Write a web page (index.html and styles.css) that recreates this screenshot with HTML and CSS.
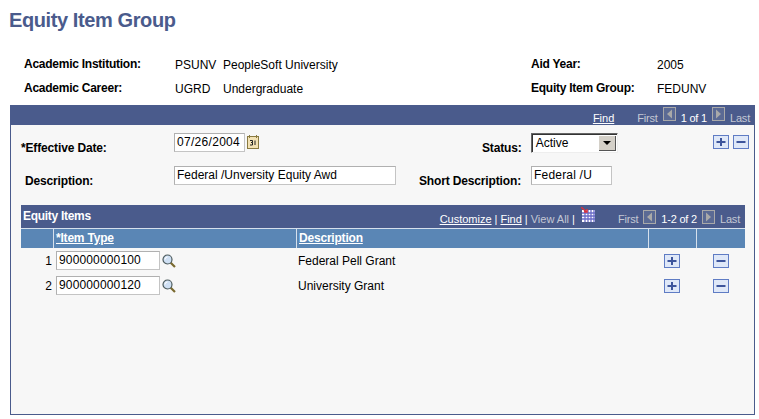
FILE: index.html
```html
<!DOCTYPE html>
<html lang="en">
<head>
  <meta charset="UTF-8" />
  <title>Equity Item Group</title>
  <link rel="stylesheet" href="styles.css">
</head>
<body>
  <svg class="defs" width="0" height="0">
    <symbol id="i-plus" viewBox="0 0 16 14"><rect x="0.5" y="0.5" width="15" height="13" fill="#dfe8f8" stroke="#5f7cc4"/><path d="M3.5 7h9M8 3v8" stroke="#3d559c" stroke-width="2"/></symbol>
    <symbol id="i-minus" viewBox="0 0 16 14"><rect x="0.5" y="0.5" width="15" height="13" fill="#dfe8f8" stroke="#5f7cc4"/><path d="M3.5 7h9" stroke="#3d559c" stroke-width="2"/></symbol>
    <symbol id="i-prev" viewBox="0 0 13 14"><rect x="0.5" y="0.5" width="12" height="13" fill="#5b6a94" stroke="#a9a9a9"/><path d="M9 2.500v9L4 7z" fill="#a9a9a9"/></symbol>
    <symbol id="i-next" viewBox="0 0 13 14"><rect x="0.5" y="0.5" width="12" height="13" fill="#5b6a94" stroke="#a9a9a9"/><path d="M4 2.500v9L9 7z" fill="#a9a9a9"/></symbol>
    <symbol id="i-lens" viewBox="0 0 14 14"><path d="M8.500 8.500l4.500 4.500" stroke="#7a6a30" stroke-width="2.200"/><circle cx="5.500" cy="5.500" r="4.500" fill="#cfe0f4" stroke="#4c5a5c" stroke-width="1.200"/><path d="M3 5.500a2.500 2.500 0 0 1 2.500-2.500" stroke="#fff" fill="none"/></symbol>
  </svg>

  <h1 class="page-title">Equity Item Group</h1>

  <div class="keys">
    <div class="key-label">Academic Institution:</div>
    <div class="key-value"><span class="key-code">PSUNV</span>PeopleSoft University</div>
    <div class="key-label">Aid Year:</div>
    <div class="key-value">2005</div>
    <div class="key-label">Academic Career:</div>
    <div class="key-value"><span class="key-code">UGRD</span>Undergraduate</div>
    <div class="key-label">Equity Item Group:</div>
    <div class="key-value">FEDUNV</div>
  </div>

  <div class="panel">
    <div class="panel-bar">
      <a class="link find-link">Find</a>
      <span class="pager">
        <span class="dim">First</span>
        <svg class="nav-icon"><use href="#i-prev"/></svg>
        <span>1 of 1</span>
        <svg class="nav-icon"><use href="#i-next"/></svg>
        <span class="dim">Last</span>
      </span>
    </div>

    <div class="panel-body">
      <div class="form-rows">
        <div class="form-row row-first">
          <label class="field-label label-date">*Effective Date:</label>
          <span class="input input-date">07/26/2004</span>
          <svg class="cal-icon" viewBox="0 0 12 14">
            <rect x="0.500" y="1.500" width="11" height="12" fill="#f3e2b4" stroke="#8a7a40"/>
            <path d="M2.500 0v3M9.500 0v3" stroke="#8a7a40"/>
            <path d="M3 5.500h2.500v2H4M5.500 7.500v2.500H3M8 5.500v4.500" stroke="#222" fill="none"/>
          </svg>
          <label class="field-label label-status">Status:</label>
          <span class="select">
            <span class="select-text">Active</span>
            <span class="select-btn"><i></i></span>
          </span>
          <span class="row-actions">
            <svg class="btn-icon"><use href="#i-plus"/></svg>
            <svg class="btn-icon"><use href="#i-minus"/></svg>
          </span>
        </div>
        <div class="form-row row-second">
          <label class="field-label label-desc">Description:</label>
          <span class="input input-desc">Federal /Unversity Equity Awd</span>
          <label class="field-label label-short">Short Description:</label>
          <span class="input input-short">Federal /U</span>
        </div>
      </div>

      <div class="grid">
        <div class="grid-title">
          <span class="grid-name">Equity Items</span>
          <span class="grid-tools">
            <a class="link">Customize</a><span class="sep">|</span><a class="link">Find</a><span class="sep">|</span><span class="dim">View All</span><span class="sep">|</span>
            <svg class="sheet-icon" viewBox="0 0 14 15">
              <rect x="1" y="3" width="13" height="12" fill="#fff"/>
              <path d="M1 6h13M1 9h13M1 12h13M4 3v12M7 3v12M10 3v12M13 3v12" stroke="#6a6cc8" stroke-width="1.300"/>
              <path d="M0 0l5 4.500M3 5h3V2" stroke="#d8323c" stroke-width="1.500" fill="none"/>
            </svg>
          </span>
          <span class="pager">
            <span class="dim pager-text">First</span>
            <svg class="nav-icon"><use href="#i-prev"/></svg>
            <span class="pager-text">1-2 of 2</span>
            <svg class="nav-icon"><use href="#i-next"/></svg>
            <span class="dim pager-text">Last</span>
          </span>
        </div>

        <div class="grid-row grid-head">
          <div class="head-cell"></div>
          <div class="head-cell"><a class="link">*Item Type</a></div>
          <div class="head-cell"><a class="link">Description</a></div>
          <div class="head-cell"></div>
          <div class="head-cell"></div>
        </div>

        <div class="grid-row item-row">
          <div class="row-num">1</div>
          <div class="type-cell">
            <span class="input input-type">900000000100</span>
            <svg class="lens-icon"><use href="#i-lens"/></svg>
          </div>
          <div class="desc-cell">Federal Pell Grant</div>
          <div class="icon-cell"><svg class="btn-icon"><use href="#i-plus"/></svg></div>
          <div class="icon-cell"><svg class="btn-icon"><use href="#i-minus"/></svg></div>
        </div>
        <div class="grid-row item-row">
          <div class="row-num">2</div>
          <div class="type-cell">
            <span class="input input-type">900000000120</span>
            <svg class="lens-icon"><use href="#i-lens"/></svg>
          </div>
          <div class="desc-cell">University Grant</div>
          <div class="icon-cell"><svg class="btn-icon"><use href="#i-plus"/></svg></div>
          <div class="icon-cell"><svg class="btn-icon"><use href="#i-minus"/></svg></div>
        </div>
      </div>
    </div>
  </div>
</body>
</html>
```

FILE: styles.css
```css
body {
  font-family: "Liberation Sans", Arial, sans-serif;
  font-size: 12px;
  background: #fff;
  color: #000;
  margin: 0;
  height: 419px;
  overflow: hidden;
}

.defs {
  position: absolute;
}

.page-title {
  color: #4a5b8c;
  font-size: 20px;
  font-weight: bold;
  letter-spacing: -0.4px;
  line-height: 24px;
  margin: 0;
  padding: 8px 0 0 9px;
}

/* key fields above the panel */
.keys {
  display: grid;
  grid-template-columns: 151px 356px 126px 1fr;
  grid-auto-rows: 24px;
  margin: 25px 0 0 24px;
  height: 48px;
}

.key-label {
  font-weight: bold;
  letter-spacing: -0.25px;
  line-height: 15px;
}

.key-value {
  line-height: 17px;
}

.key-code {
  display: inline-block;
  width: 48px;
}

/* main panel */
.panel {
  margin: 0 4px 0 10px;
  height: 309px;
  border: solid #4a5b8c;
  border-width: 0 1px 1px 1px;
  background: #f7f7f7;
}

.panel-bar {
  display: flex;
  align-items: flex-end;
  justify-content: flex-end;
  height: 20px;
  margin: 0 -1px;
  padding-right: 5px;
  box-sizing: border-box;
  background: #4a5b8c;
  color: #fff;
  font-size: 11px;
}

.link {
  color: #fff;
  text-decoration: underline;
}

.find-link {
  margin-right: 23px;
  line-height: 14px;
}

.pager {
  display: flex;
  align-items: flex-end;
  gap: 5px;
  letter-spacing: -0.2px;
  line-height: 14px;
  color: #fff;
}

.dim {
  color: #c4c8d4;
}

.nav-icon {
  width: 13px;
  height: 14px;
  margin-bottom: 4px;
}

.panel-body {
  padding: 0 9px 0 10px;
}

/* form rows */
.form-rows {
  height: 80px;
}

.form-row {
  display: flex;
  align-items: flex-start;
  box-sizing: border-box;
}

.form-row > * {
  flex-shrink: 0;
}

.row-first {
  height: 38px;
  padding-top: 8px;
}

.row-second {
  height: 42px;
  padding-top: 3px;
}

.field-label {
  font-weight: bold;
  letter-spacing: -0.15px;
  line-height: 15px;
  margin-top: 8px;
}

.label-date {
  width: 153px;
}

.label-status {
  margin-left: 223px;
  margin-right: 9px;
}

.label-desc {
  width: 153px;
  padding-left: 4px;
  box-sizing: border-box;
}

.label-short {
  margin-left: 23px;
  margin-right: 10px;
}

.input {
  display: inline-block;
  box-sizing: border-box;
  height: 19px;
  padding: 0 2px;
  line-height: 16px;
  background: #fff;
  border: 1px solid #c4c4c4;
  border-top-color: #b0b0b0;
  border-left-color: #b0b0b0;
  white-space: nowrap;
}

.input-date {
  width: 71px;
  letter-spacing: 0.3px;
}

.cal-icon {
  width: 12px;
  height: 14px;
  margin: 2px 0 0 2px;
}

.input-desc {
  width: 222px;
}

.input-short {
  width: 81px;
  letter-spacing: 0.2px;
}

.select {
  display: inline-flex;
  justify-content: space-between;
  box-sizing: border-box;
  width: 87px;
  height: 20px;
  background: #fff;
  border: 1px solid;
  border-color: #666 #eee #eee #666;
  box-shadow: inset 1px 1px 0 #333;
}

.select-text {
  padding: 1px 0 0 4px;
  line-height: 16px;
}

.select-btn {
  display: flex;
  align-items: center;
  justify-content: center;
  width: 16px;
  margin: 2px 1px 1px 0;
  background: #d4d0c8;
  border-right: 1px solid #555;
  border-bottom: 1px solid #555;
}

.select-btn i {
  border: 4px solid transparent;
  border-top: 4px solid #000;
  border-bottom: 0;
}

.row-actions {
  display: flex;
  gap: 4px;
  margin-left: 95px;
  margin-top: 2px;
}

.btn-icon {
  width: 16px;
  height: 14px;
}

/* equity items grid */
.grid-title {
  display: flex;
  align-items: flex-end;
  height: 23px;
  padding: 0 5px 0 2px;
  background: #4a5b8c;
  color: #fff;
  font-size: 11px;
}

.grid-name {
  font-weight: bold;
  font-size: 12px;
  letter-spacing: -0.3px;
  line-height: 23px;
  align-self: flex-start;
  margin-right: auto;
}

.grid-tools {
  display: flex;
  align-items: flex-end;
  line-height: 18px;
  margin-right: 23px;
}

.pager-text {
  margin-bottom: 2px;
}

.sep {
  margin: 0 3px;
}

.sheet-icon {
  width: 14px;
  height: 15px;
  margin: 0 0 6px 3px;
}

.grid-row {
  display: grid;
  grid-template-columns: 32px 243px 352px 48px 49px;
}

.grid-head {
  height: 20px;
  border-bottom: 1px solid #2f4070;
  box-sizing: border-box;
}

.head-cell {
  background: #5a86b5;
  border-top: 1px solid #d6e0ec;
  border-left: 1px solid #d6e0ec;
  font-weight: bold;
  letter-spacing: -0.2px;
  line-height: 19px;
  padding-left: 2px;
}

.head-cell:first-child {
  border-left: 0;
}

.item-row {
  height: 25px;
  align-items: center;
}

.row-num {
  text-align: right;
  padding-right: 1px;
}

.type-cell {
  display: flex;
  align-items: center;
  padding-left: 3px;
}

.input-type {
  width: 104px;
  letter-spacing: 0.15px;
}

.lens-icon {
  width: 14px;
  height: 14px;
  margin-left: 2px;
}

.desc-cell {
  padding-left: 2px;
}

.icon-cell {
  display: flex;
  justify-content: center;
}
```
